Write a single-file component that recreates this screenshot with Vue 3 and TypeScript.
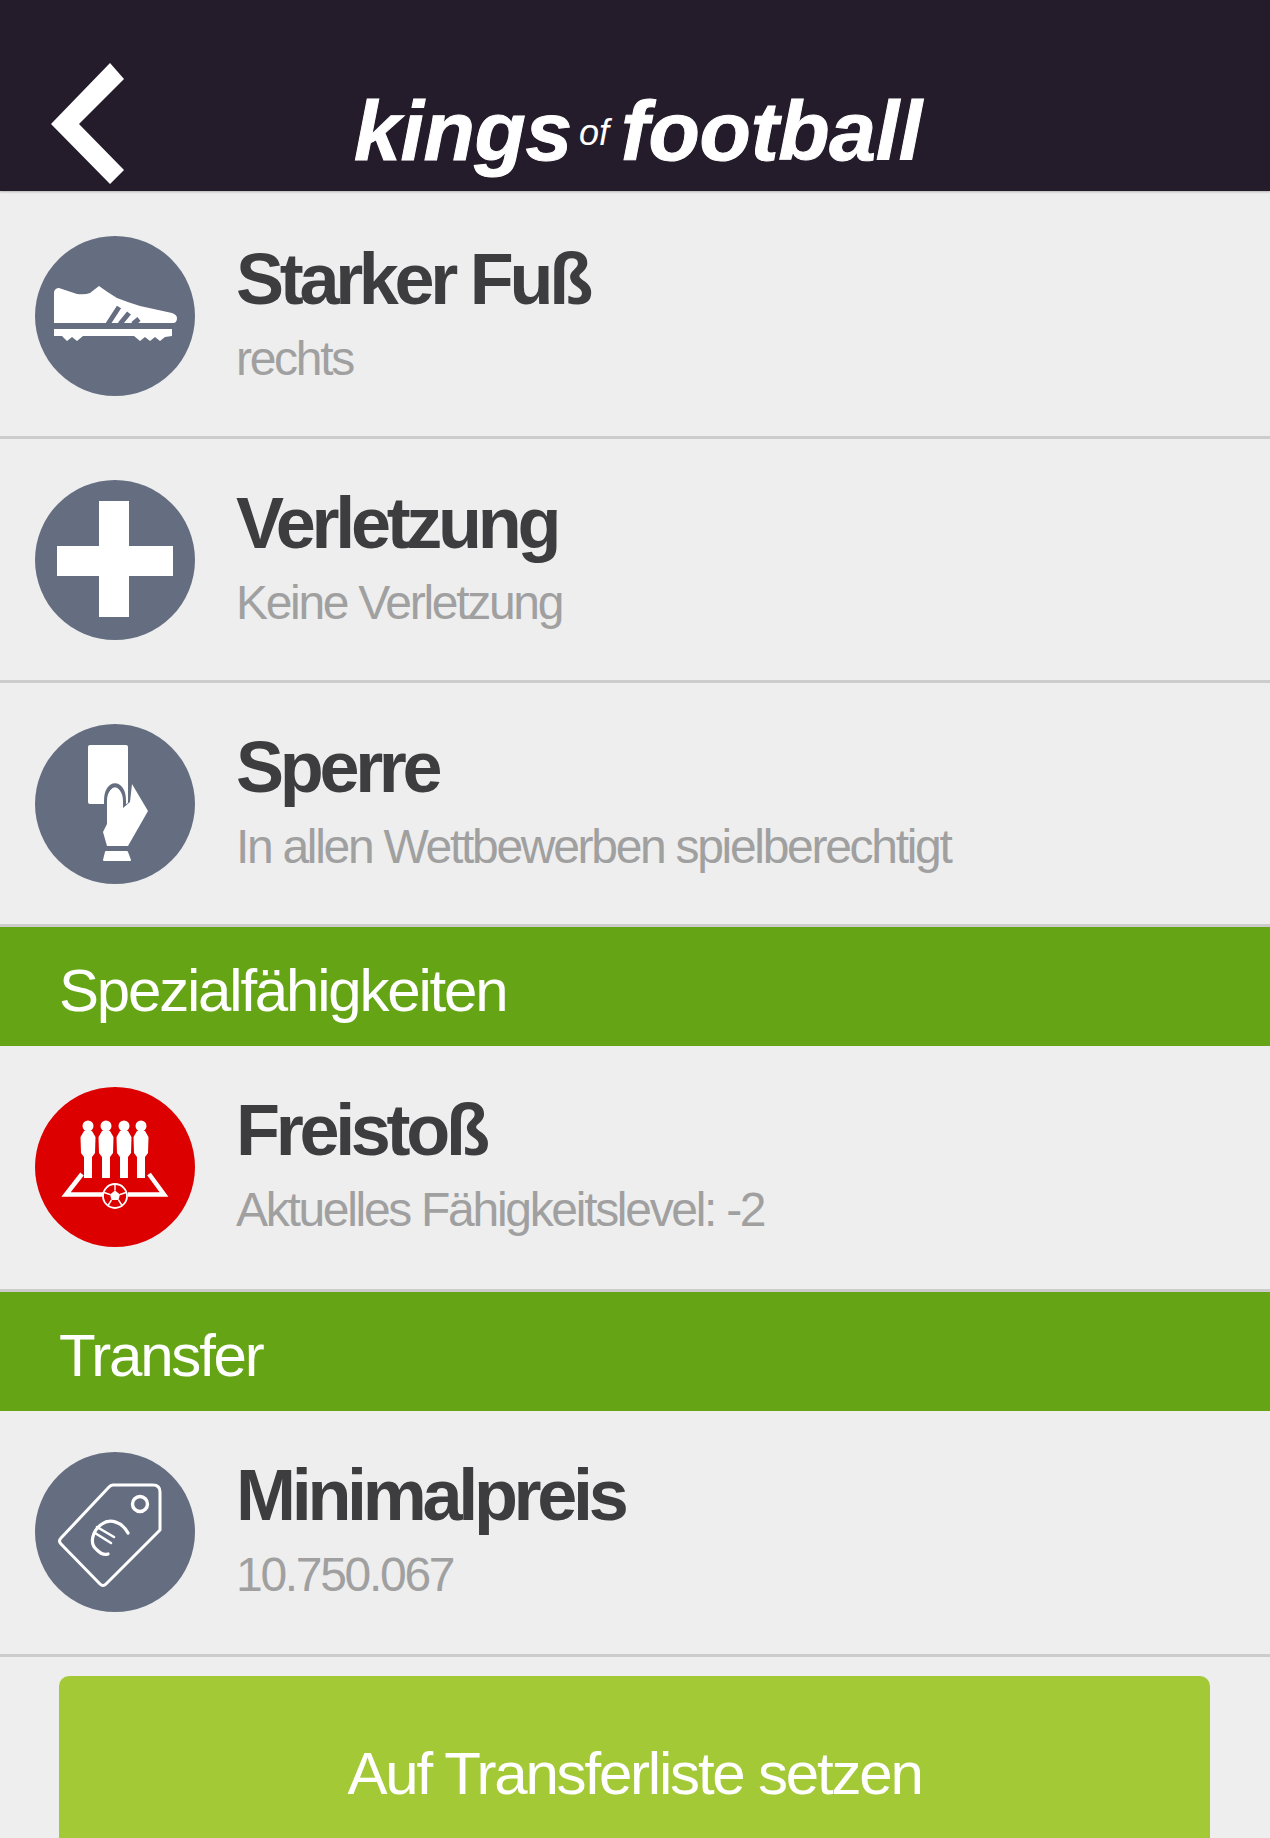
<script setup lang="ts">
type Kind = 'boot' | 'cross' | 'card' | 'wall' | 'tag'
interface Row { kind: Kind; title: string; sub: string; red?: boolean }
interface Section { heading?: string; rows: Row[] }

const sections: Section[] = [
  {
    rows: [
      { kind: 'boot', title: 'Starker Fuß', sub: 'rechts' },
      { kind: 'cross', title: 'Verletzung', sub: 'Keine Verletzung' },
      { kind: 'card', title: 'Sperre', sub: 'In allen Wettbewerben spielberechtigt' },
    ],
  },
  {
    heading: 'Spezialfähigkeiten',
    rows: [{ kind: 'wall', title: 'Freistoß', sub: 'Aktuelles Fähigkeitslevel: -2', red: true }],
  },
  {
    heading: 'Transfer',
    rows: [{ kind: 'tag', title: 'Minimalpreis', sub: '10.750.067' }],
  },
]
const players = [53, 71, 89, 106]
</script>

<template>
  <div class="page">
    <header class="bar">
      <svg class="back" viewBox="0 0 73 121" width="73" height="121">
        <polygon points="0,61 59,0 73,16 28,61 73,107 59,121" fill="#fff" />
      </svg>
      <div class="logo">kings<span class="of">of</span>football</div>
    </header>

    <template v-for="(section, i) in sections" :key="i">
      <h2 v-if="section.heading" class="heading">{{ section.heading }}</h2>
      <div v-for="row in section.rows" :key="row.title" class="row">
        <svg class="badge" :class="{ red: row.red }" viewBox="0 0 160 160" width="160" height="160">
          <circle cx="80" cy="80" r="80" class="disc" />
          <g v-if="row.kind === 'boot'" fill="#fff">
            <path d="M19 56Q20 52 24 52L42 58Q50 59 55 57L64 50Q72 56 82 62Q92 66 105 70L137 77Q142 79 142 82Q142 87 138 87H19Z" />
            <path d="M19 93H137V100L130 101L125 105L120 101L115 105L110 101L105 105L99 100H48L42 105L37 101L32 105L27 100H19Z" />
            <path d="M84 71L73 88M94 77L85 88M104 83L98 88" fill="none" stroke="#646e80" stroke-width="5" />
          </g>
          <g v-else-if="row.kind === 'cross'" fill="#fff">
            <path d="M64 21H94V66H138V96H94V137H64V96H22V66H64Z" />
          </g>
          <g v-else-if="row.kind === 'card'" fill="#fff">
            <rect x="53" y="21" width="40" height="59" rx="2" />
            <path d="M71 84V77C71 56 89 56 89 77V84" fill="none" stroke="#646e80" stroke-width="4" />
            <path d="M72 77C72 60 88 60 88 77V84L95 78L97 60L113 87L93 122H72L68 108L72 100Z" />
            <path d="M71 128H92L95 136H69Z" stroke="#fff" stroke-width="2" stroke-linejoin="round" />
          </g>
          <g v-else-if="row.kind === 'wall'" fill="#fff">
            <g v-for="x in players" :key="x">
              <circle :cx="x" cy="39" r="5.500" />
              <path :d="`M${x - 4} 44H${x + 4}L${x + 7.5} 50L${x + 7} 66L${x + 4} 70V91H${x - 4}V70L${x - 7} 66L${x - 7.5} 50Z`" />
            </g>
            <path d="M47 87L31 107.500H68M114 87L129 107.500H93" fill="none" stroke="#fff" stroke-width="4.500" />
            <circle cx="80" cy="109" r="12" fill="#dc0000" stroke="#fff" stroke-width="1.800" />
            <path d="M80 103.500L85 107.500L83.500 113H76.500L75 107.500Z" />
            <path d="M80 103.500V97.500M85 107.500L91 105.500M83.500 113L87 118.500M76.500 113L73 118.500M75 107.500L69 105.500" stroke="#fff" stroke-width="1.400" />
          </g>
          <g v-else fill="none" stroke="#fff" stroke-width="3" stroke-linejoin="round" stroke-linecap="round">
            <path d="M78 33H118Q125 33 125 40V78L71 132Q68 135 65 132L26 92Q23 89 26 86L74 35Q76 33 78 33Z" />
            <circle cx="105" cy="52" r="7.500" stroke-width="3.400" />
            <path d="M93 81C87 70 75 66 67 72C57 79 54 92 62 98C66 102 70 103 73 102" stroke-width="3.200" />
            <path d="M62 75L79 85M60 81L76 91" stroke-width="2.600" />
          </g>
        </svg>
        <div class="copy">
          <div class="title">{{ row.title }}</div>
          <div class="sub">{{ row.sub }}</div>
        </div>
      </div>
    </template>

    <div class="action">
      <button class="cta" type="button">Auf Transferliste setzen</button>
    </div>
  </div>
</template>

<style scoped>
.page {
  width: 1270px;
  height: 1838px;
  overflow: hidden;
  background: #eeeeee;
  font-family: "Liberation Sans", Arial, sans-serif;
}
.bar {
  height: 191px;
  box-sizing: border-box;
  background: #241c2b;
  display: flex;
  align-items: flex-start;
  padding: 63px 0 0 51px;
  box-shadow: 0 1px 2px rgba(0, 0, 0, 0.25);
  position: relative;
}
.back {
  flex: none;
}
.logo {
  margin: 20px 0 0 230px;
  color: #fff;
  font-size: 84px;
  line-height: 96px;
  font-weight: 700;
  font-style: italic;
  letter-spacing: -0.3px;
  white-space: nowrap;
  -webkit-text-stroke: 1px #fff;
}
.of {
  font-size: 36px;
  font-weight: 400;
  letter-spacing: 0;
  vertical-align: 15px;
  margin: 0 12px 0 7px;
  -webkit-text-stroke: 0;
}
.heading {
  margin: 0;
  height: 119px;
  box-sizing: border-box;
  padding: 7px 0 0 59px;
  background: #65a515;
  color: #fff;
  font-size: 60px;
  font-weight: 400;
  line-height: 113px;
  letter-spacing: -2.2px;
}
.row {
  height: 246px;
  box-sizing: border-box;
  padding: 41px 0 0 35px;
  display: flex;
  align-items: flex-start;
  border-bottom: 3px solid #cccccc;
}
.row:nth-child(2) {
  height: 248px;
  padding-top: 45px;
}
.row + .row {
  height: 244px;
}
.badge {
  flex: none;
}
.disc {
  fill: #646e80;
}
.red .disc {
  fill: #dc0000;
}
.copy {
  margin-left: 41px;
  padding-top: 1px;
}
.title {
  color: #3d3d3f;
  font-size: 72px;
  font-weight: 700;
  line-height: 84px;
  letter-spacing: -4.3px;
}
.sub {
  margin-top: 10px;
  color: #a0a0a0;
  font-size: 48px;
  line-height: 56px;
  letter-spacing: -2.3px;
}
.action {
  padding: 19px 60px 0 59px;
}
.cta {
  display: block;
  width: 100%;
  height: 194px;
  border: 0;
  border-radius: 10px;
  background: #a3c937;
  color: #fff;
  font-family: inherit;
  font-size: 60px;
  letter-spacing: -2.2px;
}
</style>
